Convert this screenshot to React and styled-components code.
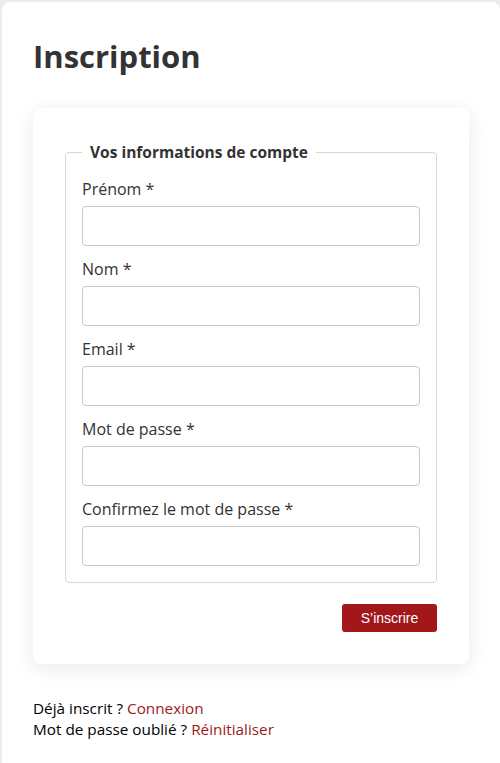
import React from "react";
import styled, { createGlobalStyle } from "styled-components";

const GlobalStyle = createGlobalStyle`
  html, body {
    margin: 0;
    padding: 0;
    background: #ececec;
    overflow-x: hidden;
  }
  body {
    font-family: "Comic Sans MS", "Open Sans", sans-serif;
    color: #000;
  }
  * { box-sizing: border-box; }
`;

const Page = styled.div`
  margin: 2px 0 0 2px;
  background: #fff;
  border-radius: 8px 8px 0 0;
  min-height: 761px;
  padding: 0 31px 20px 31px;
  width: 498px;
`;

const Title = styled.h1`
  margin: 0;
  padding: 34px 0 32px;
  font-size: 31px;
  line-height: 40px;
  font-weight: 700;
  color: #333;
`;

const Card = styled.form`
  background: #fff;
  border-radius: 8px;
  box-shadow: 0 4px 20px rgba(0, 0, 0, 0.09);
  padding: 32px;
  display: flex;
  flex-direction: column;
`;

const Fieldset = styled.fieldset`
  margin: 0;
  border: 1px solid #d6d6d6;
  border-radius: 4px;
  padding: 14px 16px 16px;
  display: flex;
  flex-direction: column;
  gap: 12px;
  min-width: 0;
`;

const Legend = styled.legend`
  padding: 0 8px;
  font-size: 15.5px;
  line-height: 24px;
  font-weight: 700;
  color: #333;
`;

const Field = styled.div`
  display: flex;
  flex-direction: column;
  gap: 6px;
`;

const Label = styled.label`
  font-size: 16px;
  line-height: 22px;
  color: #333;
`;

const Input = styled.input`
  height: 40px;
  width: 100%;
  border: 1px solid #c8c8c8;
  border-radius: 4px;
  padding: 0 10px;
  font: inherit;
  background: #fff;
`;

const Actions = styled.div`
  display: flex;
  justify-content: flex-end;
  margin-top: 21px;
`;

const Button = styled.button`
  height: 28px;
  padding: 0 16px;
  min-width: 95px;
  border: none;
  border-radius: 3px;
  background: #a1171a;
  color: #fff;
  font-family: "Liberation Sans", Arial, sans-serif;
  font-size: 14px;
  cursor: pointer;
`;

const Footer = styled.div`
  margin-top: 34px;
  font-size: 15.3px;
  line-height: 21px;
  color: #000;
`;

const FooterLine = styled.p`
  margin: 0;
`;

const Link = styled.a`
  color: #9a1a1d;
  text-decoration: none;
`;

const fields = [
  { id: "prenom", label: "Prénom *", type: "text" },
  { id: "nom", label: "Nom *", type: "text" },
  { id: "email", label: "Email *", type: "email" },
  { id: "password", label: "Mot de passe *", type: "password" },
  { id: "confirm", label: "Confirmez le mot de passe *", type: "password" },
];

export default function App() {
  return (
    <>
      <GlobalStyle />
      <Page>
        <Title>Inscription</Title>
        <Card onSubmit={(e) => e.preventDefault()}>
          <Fieldset>
            <Legend>Vos informations de compte</Legend>
            {fields.map((f) => (
              <Field key={f.id}>
                <Label htmlFor={f.id}>{f.label}</Label>
                <Input id={f.id} type={f.type} />
              </Field>
            ))}
          </Fieldset>
          <Actions>
            <Button type="submit">S’inscrire</Button>
          </Actions>
        </Card>
        <Footer>
          <FooterLine>
            Déjà inscrit ? <Link href="#">Connexion</Link>
          </FooterLine>
          <FooterLine>
            Mot de passe oublié ? <Link href="#">Réinitialiser</Link>
          </FooterLine>
        </Footer>
      </Page>
    </>
  );
}
